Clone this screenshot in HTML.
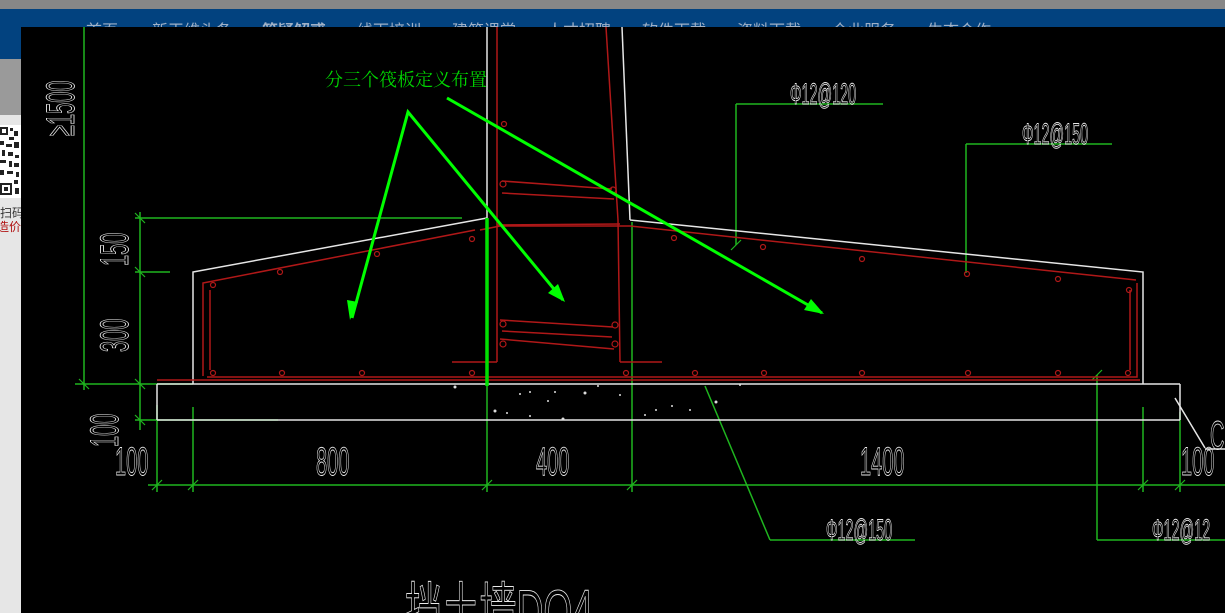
<!DOCTYPE html>
<html><head><meta charset="utf-8">
<style>
html,body{margin:0;padding:0;width:1225px;height:613px;overflow:hidden;background:#000;}
svg{display:block}
.cad{font-family:"Liberation Sans","Noto Sans CJK SC",sans-serif;fill:none;stroke:#e8e8e8;stroke-width:0.9}
</style></head><body>
<svg width="1225" height="613" viewBox="0 0 1225 613" xmlns="http://www.w3.org/2000/svg">
<rect x="0" y="0" width="1225" height="9" fill="#878787"/>
<rect x="0" y="9" width="1225" height="50" fill="#02427f"/>
<g font-family="Liberation Sans,Noto Sans CJK SC,sans-serif" font-size="16" fill="#9fb0c6">
<text x="86" y="36">首页</text><text x="152" y="36">新玉维头条</text><text x="262" y="36" font-weight="bold">答疑解惑</text>
<text x="357" y="36">线下培训</text><text x="452" y="36">建筑课堂</text><text x="547" y="36">人才招聘</text>
<text x="642" y="36">软件下载</text><text x="737" y="36">资料下载</text><text x="832" y="36">企业服务</text><text x="927" y="36">生态合作</text>
</g>
<rect x="0" y="59" width="21" height="554" fill="#e6e6e6"/>
<rect x="0" y="59" width="21" height="56" fill="#9a9a9a"/>
<g fill="#222">
<rect x="0" y="125" width="21" height="73" fill="#fff"/>
<rect x="0" y="127" width="8" height="8"/><rect x="2" y="129" width="4" height="4" fill="#fff"/>
<rect x="10" y="128" width="3" height="3"/><rect x="14" y="131" width="4" height="5"/><rect x="9" y="137" width="5" height="3"/>
<rect x="0" y="141" width="4" height="4"/><rect x="6" y="144" width="6" height="3"/><rect x="14" y="142" width="5" height="6"/>
<rect x="2" y="150" width="3" height="6"/><rect x="8" y="152" width="5" height="4"/><rect x="15" y="155" width="4" height="3"/>
<rect x="0" y="160" width="6" height="3"/><rect x="9" y="161" width="3" height="6"/><rect x="14" y="163" width="5" height="4"/>
<rect x="0" y="170" width="4" height="5"/><rect x="7" y="171" width="6" height="3"/><rect x="16" y="172" width="3" height="5"/>
<rect x="0" y="183" width="12" height="12"/><rect x="2" y="185" width="8" height="8" fill="#fff"/><rect x="4" y="187" width="4" height="4"/>
<rect x="14" y="180" width="4" height="4"/><rect x="15" y="188" width="4" height="6"/>
</g>
<text x="0" y="217" font-size="12" fill="#333" font-family="Liberation Sans,Noto Sans CJK SC,sans-serif">扫码</text>
<text x="-3" y="231" font-size="12" fill="#b01010" font-family="Liberation Sans,Noto Sans CJK SC,sans-serif">造价</text>
<rect x="21" y="27" width="1204" height="586" fill="#000"/>

<g stroke="#1fb51f" stroke-width="1.5" fill="none">
<line x1="84" y1="27" x2="84" y2="390"/>
<line x1="75" y1="384" x2="193" y2="384"/>
<line x1="135" y1="218" x2="462" y2="218"/>
<line x1="135" y1="272" x2="170" y2="272"/>
<line x1="140" y1="212" x2="140" y2="430"/>
<line x1="135" y1="420" x2="278" y2="420"/>
<line x1="148" y1="485" x2="1225" y2="485"/>
<line x1="157" y1="405" x2="157" y2="492"/>
<line x1="193" y1="407" x2="193" y2="492"/>
<line x1="487" y1="384" x2="487" y2="492"/>
<line x1="632" y1="222" x2="632" y2="492"/>
<line x1="1143" y1="407" x2="1143" y2="492"/>
<line x1="1180" y1="412" x2="1180" y2="492"/>
<line x1="1097" y1="375" x2="1097" y2="540"/><line x1="1097" y1="540" x2="1225" y2="540"/>
<line x1="705" y1="386" x2="770" y2="540"/><line x1="770" y1="540" x2="915" y2="540"/>
<line x1="736" y1="104" x2="883" y2="104"/><line x1="736" y1="104" x2="736" y2="245"/>
<line x1="966" y1="144" x2="1112" y2="144"/><line x1="966" y1="144" x2="966" y2="273"/>
</g>
<g stroke="#1fb51f" stroke-width="1.2">
<line x1="135" y1="213" x2="145" y2="223"/><line x1="135" y1="267" x2="145" y2="277"/><line x1="135" y1="379" x2="145" y2="389"/>
<line x1="79" y1="379" x2="89" y2="389"/><line x1="135" y1="415" x2="145" y2="425"/>
<line x1="152" y1="490" x2="162" y2="480"/><line x1="188" y1="490" x2="198" y2="480"/><line x1="482" y1="490" x2="492" y2="480"/>
<line x1="627" y1="490" x2="637" y2="480"/><line x1="1138" y1="490" x2="1148" y2="480"/><line x1="1175" y1="490" x2="1185" y2="480"/>
<line x1="1092" y1="380" x2="1102" y2="370"/><line x1="731" y1="250" x2="741" y2="240"/>
</g>

<g stroke="#e6e6e6" stroke-width="1.5" fill="none">
<line x1="487" y1="27" x2="487" y2="218"/>
<line x1="622" y1="27" x2="630" y2="220"/>
<polyline points="487,218 193,272 193,384"/>
<polyline points="630,220 1143,272 1143,384"/>
<line x1="157" y1="384" x2="1180" y2="384"/>
<line x1="157" y1="420" x2="1180" y2="420"/>
<line x1="157" y1="384" x2="157" y2="420"/>
<line x1="1180" y1="384" x2="1180" y2="420"/>
<line x1="1175" y1="398" x2="1205" y2="448"/><line x1="1205" y1="449" x2="1225" y2="449"/>
</g>
<g fill="#ddd">
<circle cx="455" cy="387" r="1.5"/><circle cx="520" cy="394" r="1"/><circle cx="530" cy="392" r="1"/><circle cx="555" cy="392" r="1"/>
<circle cx="585" cy="393" r="1.5"/><circle cx="598" cy="386" r="1"/><circle cx="495" cy="411" r="1.5"/><circle cx="530" cy="416" r="1"/>
<circle cx="563" cy="419" r="1.5"/><circle cx="620" cy="395" r="1"/><circle cx="645" cy="415" r="1"/><circle cx="656" cy="410" r="1"/>
<circle cx="672" cy="406" r="1"/><circle cx="690" cy="410" r="1"/><circle cx="716" cy="402" r="1.5"/><circle cx="740" cy="385" r="1"/>
<circle cx="507" cy="413" r="1"/><circle cx="548" cy="401" r="1"/>
</g>

<g stroke="#b01818" stroke-width="1.5" fill="none">
<line x1="497" y1="27" x2="497" y2="362"/>
<polyline points="606,27 618,220 620,362"/>
<line x1="452" y1="362" x2="497" y2="362"/>
<line x1="620" y1="362" x2="662" y2="362"/>
<line x1="157" y1="380" x2="1140" y2="380"/>
<polyline points="203,376 203,283 475,230"/>
<polyline points="210,370 210,290"/>
<polyline points="207,377 1137,377 1137,283"/>
<line x1="1130" y1="370" x2="1130" y2="290"/>
<line x1="497" y1="225" x2="620" y2="224"/>
<polyline points="480,230 500,226 630,226 1136,280"/>
<path d="M502 181 L612 189 M502 193 L614 199 M500 320 L613 327 M500 339 L614 349 M502 331 L612 337"/>
</g>
<g stroke="#b01818" stroke-width="1.2" fill="none">
<circle cx="504" cy="124" r="2.5"/><circle cx="280" cy="272" r="2.5"/><circle cx="377" cy="254" r="2.5"/><circle cx="472" cy="239" r="2.5"/>
<circle cx="213" cy="285" r="2.5"/><circle cx="213" cy="373" r="2.5"/><circle cx="282" cy="373" r="2.5"/><circle cx="362" cy="373" r="2.5"/>
<circle cx="472" cy="373" r="2.5"/><circle cx="626" cy="373" r="2.5"/><circle cx="695" cy="373" r="2.5"/><circle cx="764" cy="373" r="2.5"/>
<circle cx="862" cy="373" r="2.5"/><circle cx="968" cy="373" r="2.5"/><circle cx="1058" cy="373" r="2.5"/><circle cx="1128" cy="373" r="2.5"/>
<circle cx="674" cy="238" r="2.5"/><circle cx="763" cy="247" r="2.5"/><circle cx="862" cy="259" r="2.5"/><circle cx="967" cy="274" r="2.5"/>
<circle cx="1058" cy="279" r="2.5"/><circle cx="1129" cy="290" r="2.5"/>
<circle cx="503" cy="184" r="3"/><circle cx="503" cy="324" r="3"/><circle cx="503" cy="344" r="3"/><circle cx="615" cy="325" r="3"/><circle cx="615" cy="344" r="3"/><circle cx="613" cy="190" r="3"/>
</g>

<line x1="487" y1="218" x2="487" y2="386" stroke="#00e000" stroke-width="3.5"/>
<g stroke="#00ff00" stroke-width="3" fill="none">
<polyline points="352,318 408,112 563,300"/>
<line x1="447" y1="98" x2="822" y2="313"/>
</g>
<g fill="#00ff00">
<polygon points="350,320 347,300 358,302"/>
<polygon points="565,302 548,293 558,284"/>
<polygon points="824,314 804,310 811,299"/>
</g>
<text x="325" y="86" font-size="18" fill="#00d400" font-family="Liberation Serif,Noto Serif CJK SC,serif">分三个筏板定义布置</text>

<g class="cad" font-size="40">
<text transform="translate(74,136) rotate(-90) scale(0.5,1)">≥1500</text>
<text transform="translate(128,266) rotate(-90) scale(0.5,1)">150</text>
<text transform="translate(128,352) rotate(-90) scale(0.5,1)">300</text>
<text transform="translate(118,447) rotate(-90) scale(0.5,1)">100</text>
<text transform="translate(115,475) scale(0.5,1)">100</text>
<text transform="translate(316,475) scale(0.5,1)">800</text>
<text transform="translate(536,475) scale(0.5,1)">400</text>
<text transform="translate(860,475) scale(0.5,1)">1400</text>
<text transform="translate(1181,475) scale(0.5,1)">100</text>
<text transform="translate(1210,449) scale(0.5,1)">C</text>
</g>
<g class="cad" font-size="30">
<text transform="translate(790,104) scale(0.48,1)">Φ12@120</text>
<text transform="translate(1022,144) scale(0.48,1)">Φ12@150</text>
<text transform="translate(826,540) scale(0.48,1)">Φ12@150</text>
<text transform="translate(1152,540) scale(0.48,1)">Φ12@12</text>
</g>
<text class="cad" font-size="60" transform="translate(405,632) scale(0.62,1)">挡土墙DQ4</text>
</svg>
</body></html>
